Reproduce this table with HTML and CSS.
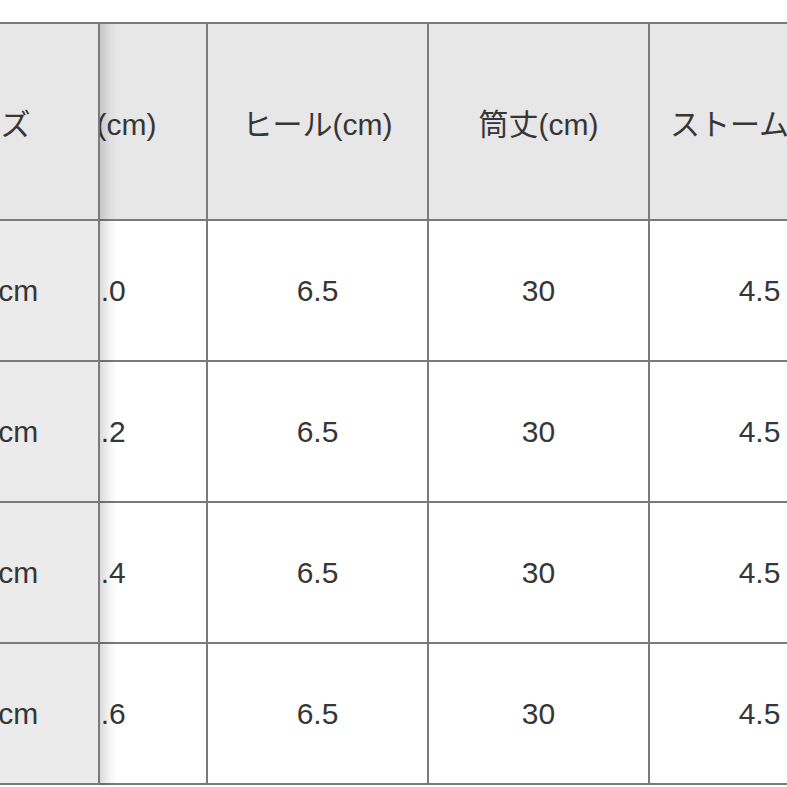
FILE: index.html
```html
<!DOCTYPE html>
<html lang="ja">
<head>
<meta charset="utf-8">
<link rel="stylesheet" href="styles.css">
</head>
<body>
<div class="wrap">
  <div class="fixed">
    <div class="cell head size-head">サイズ</div>
    <div class="cell side">22.5cm</div>
    <div class="cell side">23.0cm</div>
    <div class="cell side">23.5cm</div>
    <div class="cell side">24.0cm</div>
  </div>
  <div class="scroller">
    <div class="grid">
      <div class="cell head">足幅(cm)</div>
      <div class="cell head">ヒール(cm)</div>
      <div class="cell head">筒丈(cm)</div>
      <div class="cell head">ストーム(cm)</div>

      <div class="cell">23.0</div>
      <div class="cell">6.5</div>
      <div class="cell">30</div>
      <div class="cell">4.5</div>

      <div class="cell">23.2</div>
      <div class="cell">6.5</div>
      <div class="cell">30</div>
      <div class="cell">4.5</div>

      <div class="cell">23.4</div>
      <div class="cell">6.5</div>
      <div class="cell">30</div>
      <div class="cell">4.5</div>

      <div class="cell">23.6</div>
      <div class="cell">6.5</div>
      <div class="cell">30</div>
      <div class="cell">4.5</div>
    </div>
  </div>
</div>
</body>
</html>
```

FILE: styles.css
```css
html, body {
  margin: 0;
  padding: 0;
  background: #ffffff;
}
body {
  width: 787px;
  height: 787px;
  overflow: hidden;
  font-family: "Liberation Sans", "Noto Sans CJK JP", sans-serif;
  font-size: 30px;
  color: #363636;
}
.wrap {
  display: flex;
  margin-top: 22px;
  border-top: 2px solid #7a7a7a;
}
.fixed {
  position: relative;
  z-index: 2;
  flex: 0 0 214px;
  margin-left: -114px;
  display: flex;
  flex-direction: column;
}
.fixed::after {
  content: "";
  position: absolute;
  top: 0;
  bottom: 0;
  right: -18px;
  width: 18px;
  background: linear-gradient(to right, rgba(0,0,0,0.14), rgba(0,0,0,0.03) 60%, rgba(0,0,0,0));
  pointer-events: none;
}
.scroller {
  flex: 1 1 auto;
  overflow: hidden;
}
.grid {
  display: grid;
  grid-template-columns: repeat(4, 221px);
  grid-template-rows: 197px repeat(4, 141px);
  margin-left: -113px;
  width: 884px;
}
.cell {
  box-sizing: border-box;
  display: flex;
  align-items: center;
  justify-content: center;
  white-space: nowrap;
  border-right: 2px solid #7a7a7a;
  border-bottom: 2px solid #7a7a7a;
  background: #ffffff;
  height: 141px;
}
.cell.head {
  background: #e7e7e7;
  height: 197px;
}
.cell.side {
  background: #ebebeb;
  padding-right: 6px;
}
.cell.size-head {
  padding-right: 12px;
}
```
